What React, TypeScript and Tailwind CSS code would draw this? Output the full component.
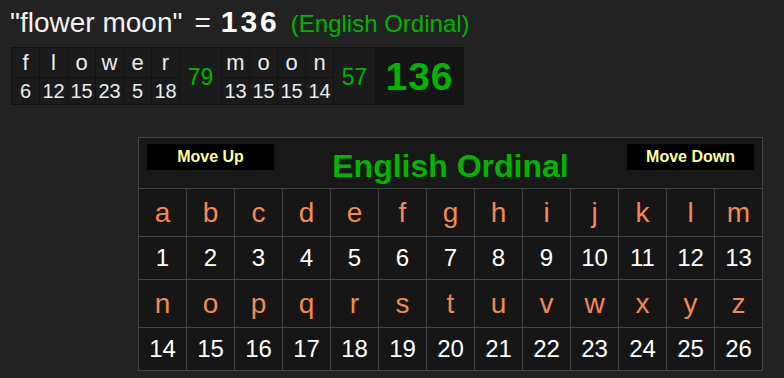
const word1: [string, number][] = [
  ["f", 6],
  ["l", 12],
  ["o", 15],
  ["w", 23],
  ["e", 5],
  ["r", 18],
];
const word2: [string, number][] = [
  ["m", 13],
  ["o", 15],
  ["o", 15],
  ["n", 14],
];

const letters = "abcdefghijklmnopqrstuvwxyz".split("");

function LetterCol({ letter, value }: { letter: string; value: number }) {
  return (
    <div className="flex flex-col gap-px w-[27px]">
      <div className="h-[29px] bg-[#1b1b1b] flex items-center justify-center text-[22px] leading-none text-[#e6edf5]">
        {letter}
      </div>
      <div className="h-[26px] bg-[#1b1b1b] flex items-center justify-center text-[20px] leading-none text-[#e6edf5]">
        {value}
      </div>
    </div>
  );
}

function SumCol({ children }: { children: React.ReactNode }) {
  return (
    <div className="w-[41px] bg-[#1b1b1b] flex items-center justify-center text-[23px] leading-none text-[#00b400] pt-[2px]">
      {children}
    </div>
  );
}

function MoveButton({ children }: { children: React.ReactNode }) {
  return (
    <div className="w-[127px] h-[26px] bg-[#000] flex items-center justify-center text-[16px] font-bold text-[#ffff99]">
      {children}
    </div>
  );
}

function Row({ items, offset, tall }: { items: string[] | number[]; offset: number; tall: boolean }) {
  return (
    <>
      {items.map((it, i) => (
        <div
          key={offset + i}
          className={
            tall
              ? "h-[47px] bg-[#161616] flex items-center justify-center text-[28px] text-[#f08a50]"
              : "h-[42px] bg-[#161616] flex items-center justify-center text-[24px] text-white"
          }
        >
          {it}
        </div>
      ))}
    </>
  );
}

export default function App() {
  const first = letters.slice(0, 13);
  const second = letters.slice(13);
  return (
    <div className="min-h-screen bg-[#222222] font-['Liberation_Sans',Arial,sans-serif] text-white">
      <div className="h-[41px] pl-[10px] pt-[7px] leading-[30px] flex items-baseline whitespace-nowrap">
        <span className="text-[28px] text-[#f2f2f2]">"flower moon"</span>
        <span className="text-[28px] text-[#f2f2f2] ml-[12px]">=</span>
        <span className="text-[30px] font-bold tracking-[3px] ml-[10px] text-white">136</span>
        <span className="text-[24px] text-[#00b400] ml-[11px]">(English Ordinal)</span>
      </div>

      <div className="ml-[11px] mt-[6px] flex gap-px bg-[#121212] p-px w-fit">
        {word1.map(([l, n], i) => (
          <LetterCol key={"a" + i} letter={l} value={n} />
        ))}
        <SumCol>79</SumCol>
        {word2.map(([l, n], i) => (
          <LetterCol key={"b" + i} letter={l} value={n} />
        ))}
        <SumCol>57</SumCol>
        <div className="w-[87px] bg-[#141414] flex items-center justify-center text-[39px] leading-none font-bold tracking-[1px] text-[#00b400]">
          136
        </div>
      </div>

      <div className="ml-[138px] mt-[32px] bg-[#444] p-px flex flex-col gap-px w-fit">
        <div className="h-[50px] bg-[#181818] flex items-start justify-between px-[8px] pt-[6px]">
          <MoveButton>Move Up</MoveButton>
          <div className="text-[32px] font-bold text-[#00b400] leading-[36px] pt-[4px]">English Ordinal</div>
          <MoveButton>Move Down</MoveButton>
        </div>
        <div className="grid grid-cols-[repeat(13,47px)] gap-px">
          <Row items={first} offset={0} tall={true} />
          <Row items={first.map((_, i) => i + 1)} offset={100} tall={false} />
          <Row items={second} offset={200} tall={true} />
          <Row items={second.map((_, i) => i + 14)} offset={300} tall={false} />
        </div>
      </div>
    </div>
  );
}
